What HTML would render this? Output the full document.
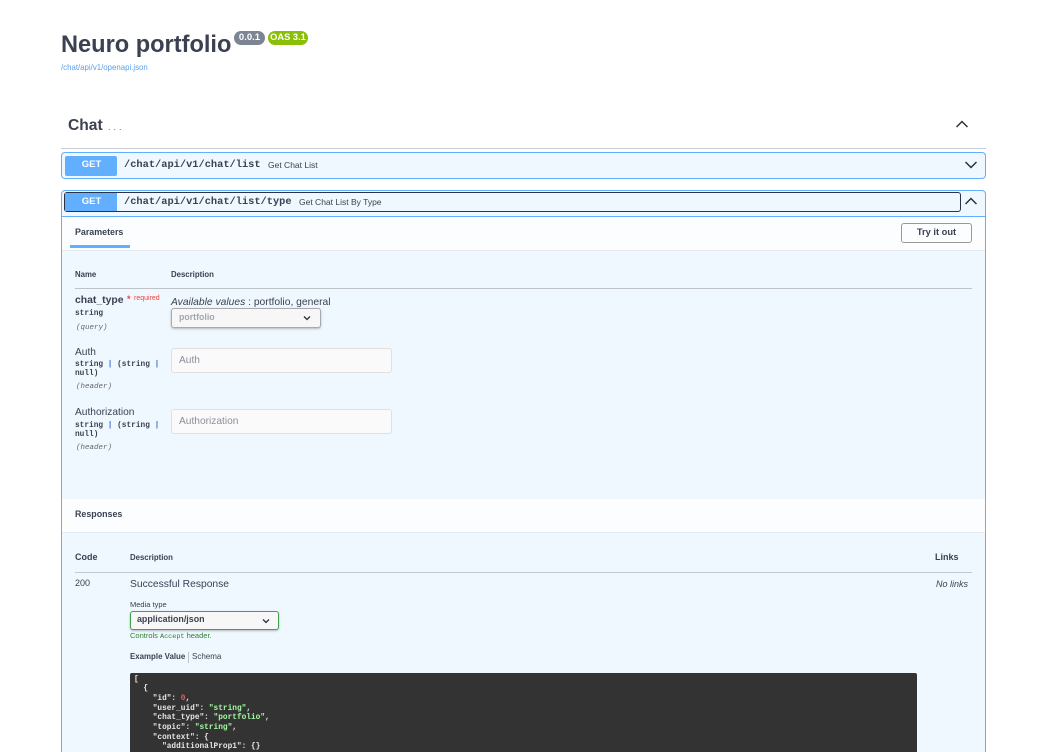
<!DOCTYPE html>
<html><head><meta charset="utf-8"><style>
html,body{margin:0;padding:0;background:#fff;height:752px;overflow:hidden}
body{width:1042px;position:relative;font-family:"Liberation Sans",sans-serif;color:#3b4151}
#w{position:absolute;left:0;top:0;width:1042px;height:752px;overflow:hidden;filter:blur(.3px)}
.a{position:absolute;white-space:nowrap}
.m{font-family:"Liberation Mono",monospace}
.b{font-weight:bold}
svg{position:absolute;fill:none;stroke:#2b2f3a;stroke-width:1.5}
.inp{position:absolute;left:171px;width:219px;height:23px;background:#fafafa;border:1px solid #e0e0e0;border-radius:3px;font-size:10.2px;line-height:23px;color:#8a8f99;text-indent:7px}
.code div{height:9.7px;white-space:pre}
.s{color:#a2fca2}.n{color:#d36363}
</style></head><body><div id="w">
<div class="a b" style="left:61px;top:30px;font-size:23.6px;line-height:30px">Neuro portfolio</div>
<div class="a b" style="left:234px;top:31px;width:31px;height:14px;background:#7d8492;border-radius:8px;color:#fff;font-size:9.5px;line-height:13px;text-align:center">0.0.1</div>
<div class="a b" style="left:268px;top:31px;width:40px;height:14px;background:#89bf04;border-radius:8px;color:#fff;font-size:9.3px;line-height:13px;text-align:center">OAS 3.1</div>
<div class="a" style="left:61px;top:63px;font-size:7.85px;line-height:10px;color:#5a9fe8">/chat/api/v1/openapi.json</div>
<div class="a b" style="left:68px;top:116px;font-size:15.6px;line-height:20px">Chat</div>
<div class="a" style="left:108px;top:121px;font-size:9px;line-height:12px;letter-spacing:3px;color:#666">...</div>
<svg style="left:956px;top:120px" width="12" height="8"><path d="M.5 7 6 1.5 11.5 7"/></svg>
<div class="a" style="left:61px;top:148px;width:925px;height:1px;background:#c9ccd1"></div>
<div class="a" style="left:61px;top:152px;width:923px;height:25px;border:1px solid #61affe;border-radius:4px;background:#eff7ff"></div>
<div class="a b" style="left:65px;top:156px;width:52px;height:20px;background:#61affe;border-radius:2px;color:#fff;font-size:9.5px;line-height:18px;text-align:center;text-indent:1px">GET</div>
<div class="a m b" style="left:124px;top:159px;font-size:10.35px;line-height:12px">/chat/api/v1/chat/list</div>
<div class="a" style="left:268px;top:159px;font-size:8.5px;line-height:12px">Get Chat List</div>
<svg style="left:965px;top:161px" width="12" height="8"><path d="M.5 1 6 6.5 11.5 1"/></svg>
<div class="a" style="left:61px;top:190px;width:923px;height:570px;border:1px solid #61affe;border-radius:4px 4px 0 0;background:#eff7ff"></div>
<div class="a" style="left:62px;top:216px;width:923px;height:1px;background:#61affe"></div>
<div class="a" style="left:64px;top:192px;width:895px;height:18px;border:1.5px solid #2b3446;border-radius:3px"></div>
<div class="a b" style="left:65px;top:193px;width:52px;height:18px;background:#61affe;color:#fff;font-size:9.5px;line-height:18px;text-align:center;text-indent:1px">GET</div>
<div class="a m b" style="left:124px;top:195.5px;font-size:10.35px;line-height:12px">/chat/api/v1/chat/list/type</div>
<div class="a" style="left:299px;top:196px;font-size:8.5px;line-height:12px">Get Chat List By Type</div>
<svg style="left:965px;top:197px" width="12" height="8"><path d="M.5 7 6 1.5 11.5 7"/></svg>
<div class="a" style="left:62px;top:217px;width:923px;height:33px;background:#fbfdff;border-bottom:1px solid #e6ebf2"></div>
<div class="a b" style="left:75px;top:226px;font-size:8.9px;line-height:12px">Parameters</div>
<div class="a" style="left:70px;top:245px;width:60px;height:2.5px;background:#61affe"></div>
<div class="a b" style="left:901px;top:223px;width:69px;height:18px;border:1px solid #999;border-radius:3px;font-size:9.3px;line-height:17px;text-align:center">Try it out</div>
<div class="a b" style="left:75px;top:270px;font-size:7.8px;line-height:10px">Name</div>
<div class="a b" style="left:171px;top:270px;font-size:7.8px;line-height:10px">Description</div>
<div class="a" style="left:75px;top:288px;width:897px;height:1px;background:#bfc3c9"></div>
<div class="a b" style="left:75px;top:294px;font-size:10.4px;line-height:14px">chat_type</div>
<div class="a b" style="left:127px;top:294px;font-size:9px;line-height:10px;color:#f93e3e">*</div>
<div class="a" style="left:134px;top:293.5px;font-size:7px;line-height:10px;color:#f93e3e">required</div>
<div class="a m b" style="left:75px;top:309px;font-size:7.8px;line-height:10px">string</div>
<div class="a m" style="left:76px;top:322.5px;font-size:7.5px;line-height:10px;font-style:italic;color:#666">(query)</div>
<div class="a" style="left:171px;top:295.5px;font-size:10.3px;line-height:13px"><i>Available values</i> : portfolio, general</div>
<div class="a b" style="left:171px;top:308px;width:148px;height:18px;background:#f7f7f7;border:1px solid #aaa;border-radius:3px;box-shadow:0 1px 2px rgba(0,0,0,.25);font-size:8.8px;line-height:16px;color:#a3a6ad;text-indent:7px">portfolio</div>
<svg style="left:303px;top:315px;stroke-width:1.3" width="8" height="6"><path d="M1 1.5 4 4.5 7 1.5"/></svg>
<div class="a" style="left:75px;top:345.5px;font-size:10.2px;line-height:13px">Auth</div>
<div class="a m b" style="left:75px;top:359.5px;font-size:7.8px;line-height:10px;white-space:pre">string <span style="color:#3b6fd0">|</span> (string <span style="color:#3b6fd0">|</span></div>
<div class="a m b" style="left:75px;top:368.5px;font-size:7.8px;line-height:10px">null)</div>
<div class="a m" style="left:76px;top:382px;font-size:7.5px;line-height:10px;font-style:italic;color:#666">(header)</div>
<div class="inp" style="top:348px">Auth</div>
<div class="a" style="left:75px;top:405.5px;font-size:10.2px;line-height:13px">Authorization</div>
<div class="a m b" style="left:75px;top:420.5px;font-size:7.8px;line-height:10px;white-space:pre">string <span style="color:#3b6fd0">|</span> (string <span style="color:#3b6fd0">|</span></div>
<div class="a m b" style="left:75px;top:429.5px;font-size:7.8px;line-height:10px">null)</div>
<div class="a m" style="left:76px;top:443px;font-size:7.5px;line-height:10px;font-style:italic;color:#666">(header)</div>
<div class="inp" style="top:409px">Authorization</div>
<div class="a" style="left:62px;top:499px;width:923px;height:33px;background:#fbfdff;border-bottom:1px solid #e6ebf2"></div>
<div class="a b" style="left:75px;top:508px;font-size:8.9px;line-height:12px">Responses</div>
<div class="a b" style="left:75px;top:551px;font-size:9px;line-height:12px">Code</div>
<div class="a b" style="left:130px;top:553px;font-size:7.8px;line-height:10px">Description</div>
<div class="a b" style="left:935px;top:551px;font-size:9px;line-height:12px">Links</div>
<div class="a" style="left:75px;top:572px;width:897px;height:1px;background:#c4c8ce"></div>
<div class="a" style="left:75px;top:577px;font-size:9px;line-height:12px">200</div>
<div class="a" style="left:130px;top:578px;font-size:10.3px;line-height:13px">Successful Response</div>
<div class="a" style="left:936px;top:578px;font-size:9px;line-height:12px;font-style:italic">No links</div>
<div class="a" style="left:130px;top:600px;font-size:7.5px;line-height:10px">Media type</div>
<div class="a b" style="left:130px;top:611px;width:147px;height:17px;background:#f7f7f7;border:1px solid #41a148;border-radius:3px;box-shadow:0 1px 2px rgba(0,0,0,.25);font-size:8.9px;line-height:14px;text-indent:6px">application/json</div>
<svg style="left:262px;top:618px;stroke-width:1.3" width="8" height="6"><path d="M1 1.5 4 4.5 7 1.5"/></svg>
<div class="a" style="left:130px;top:631px;font-size:7.5px;line-height:10px;color:#2f8132">Controls <span class="m" style="font-size:6.8px">Accept</span> header.</div>
<div class="a b" style="left:130px;top:652px;font-size:7.9px;line-height:10px">Example Value</div>
<div class="a" style="left:187.5px;top:652px;width:1px;height:11px;background:#bfc3c9"></div>
<div class="a" style="left:192px;top:652px;font-size:8px;line-height:10px">Schema</div>
<div class="a" style="left:130px;top:673px;width:787px;height:90px;background:#333;border-radius:2px"></div>
<div class="a m b code" style="left:134px;top:675.5px;font-size:7.8px;line-height:9.7px;color:#e6e6e6">
<div>[</div>
<div>  {</div>
<div>    "id": <span class="n">0</span>,</div>
<div>    "user_uid": <span class="s">"string"</span>,</div>
<div>    "chat_type": <span class="s">"portfolio"</span>,</div>
<div>    "topic": <span class="s">"string"</span>,</div>
<div>    "context": {</div>
<div>      "additionalProp1": {}</div>
</div>
</div></body></html>
